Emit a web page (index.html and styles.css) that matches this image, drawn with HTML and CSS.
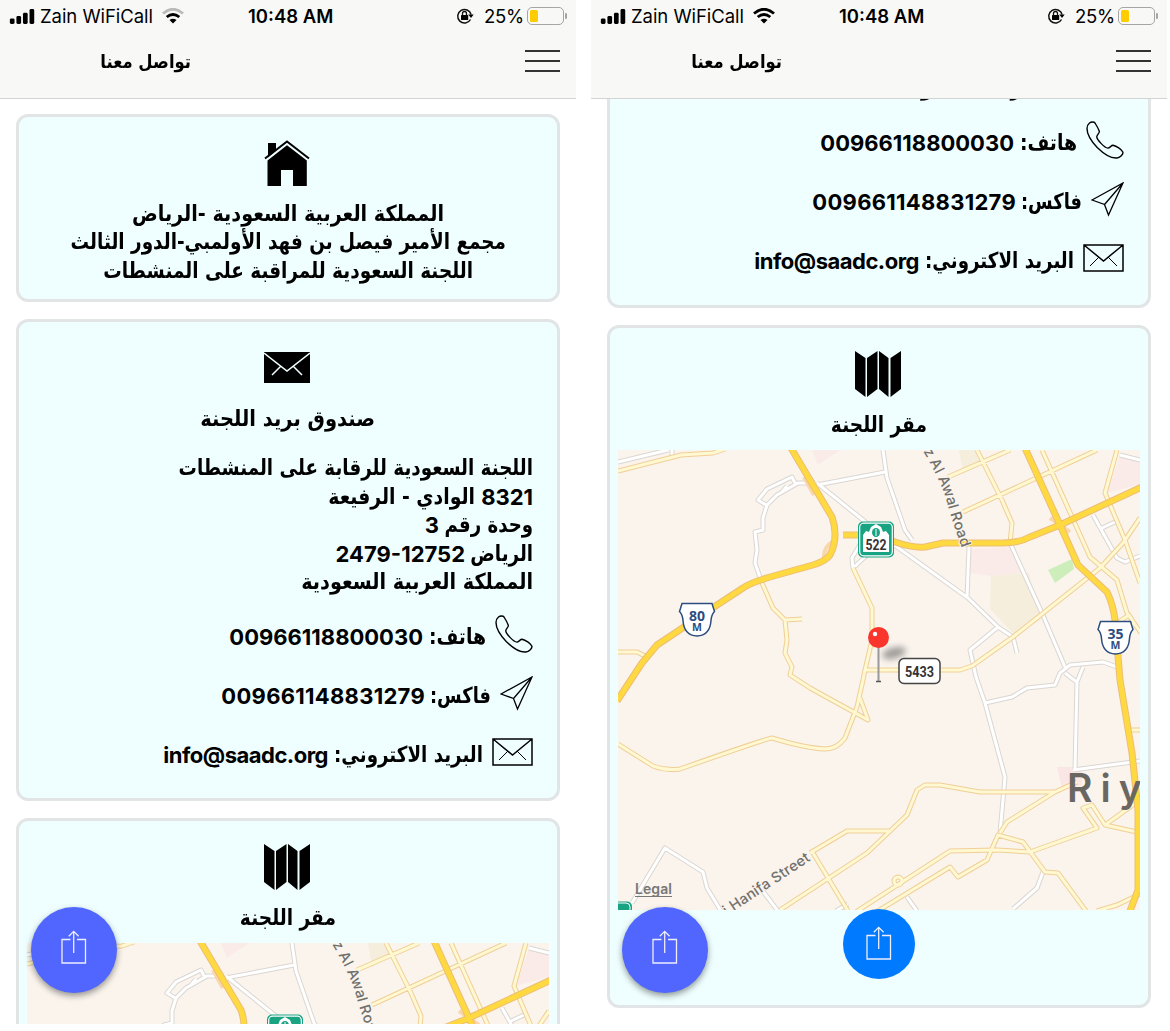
FILE: index.html
```html
<!DOCTYPE html>
<html lang="ar">
<head>
<meta charset="utf-8">
<title>تواصل معنا</title>
<link rel="stylesheet" href="styles.css">
</head>
<body>
<svg class="defs" aria-hidden="true">
  <defs>
    <symbol id="signal" viewBox="0 0 27 16">
      <rect x="0" y="10" width="5" height="6" rx="1.5"/><rect x="7" y="7.500" width="5" height="8.500" rx="1.500"/><rect x="14" y="4" width="5" height="12" rx="1.500"/><rect x="21" y="0" width="5" height="16" rx="1.500"/>
    </symbol>
    <symbol id="lock" viewBox="0 0 18 18">
      <path d="M14.500 12.500a6.800 6.800 0 1 1 .6-5" fill="none" stroke="#111" stroke-width="1.500"/>
      <path d="M12.300 7.400h5.400l-2.700 3.500z"/><rect x="5" y="8" width="7.200" height="5" rx=".6"/>
      <path d="M6.500 8.500V6.500a2 2 0 0 1 4 0v2" fill="none" stroke="#111" stroke-width="1.300"/>
    </symbol>
    <symbol id="home" viewBox="0 0 46 46">
      <path d="M4 3h8v7.500L4 17.500z"/><path d="M1 18.500 23 1.500l22 17" fill="none" stroke="#000" stroke-width="2"/>
      <path d="M3.500 20.500 23 5.300l19.800 15.200V46H29V30H17v16H3.500z"/>
    </symbol>
    <symbol id="mail-solid" viewBox="0 0 46 31">
      <path d="M0 0h46v31H0z"/><path d="M0 1l23 18L46 1M17 14 8 23m21-9 9 9" fill="none" stroke="#efffff" stroke-width="1.500"/>
    </symbol>
    <symbol id="map-icon" viewBox="0 0 46 46">
      <path d="M0 0l10.500 7v39L0 38zM12 7l10.500-7v38L12 46zM24 0l9.500 7v39L24 38zM35.500 7 46 0v38l-10.500 8z"/>
    </symbol>
    <symbol id="phone" viewBox="0 0 38 38">
      <path d="M3.500 2C5 .8 8 .5 9 2c2 3.200 3.500 6 4.300 8.200.6 1.700-2.200 3.500-2.500 5.300-.5 3 8 11.500 11 11.600 2 .1 3.500-3 5.200-2.800 3.500.8 8.500 4 9.800 6.700.8 2-2.800 5.700-6 6-7.500.7-15-6-19.600-10.500C6.500 21.500 1 14 1 7.500 1 5 2 3.200 3.500 2z" fill="none" stroke="#000" stroke-width="1.400"/>
    </symbol>
    <symbol id="plane" viewBox="0 0 33 36">
      <path d="M1 18 32 1 17.500 33 13.500 22.500zM13.500 22.500 32 1M1 18l12.500 4.500" fill="none" stroke="#000" stroke-width="1.300"/>
    </symbol>
    <symbol id="mail" viewBox="0 0 41 30">
      <path d="M1 1h39v26H1zM1 1l19.500 16L40 1" fill="none" stroke="#000" stroke-width="1.500"/><path d="M16 13 7 22m18-9 9 9" fill="none" stroke="#000"/>
    </symbol>
    <symbol id="share" viewBox="0 0 26 34">
      <path d="M9.500 9.500H1V33h23.500V9.500H16M12.700 23V1.500M7.800 6.300l4.900-4.900 4.900 4.900" fill="none" stroke="#eef" stroke-width="1.300"/>
    </symbol>

    <path id="side-roads" d="M618 462 668 450M672 449v8M815 483h-17l-21 12-10 10-4 13v12l-8 2 2 18-2 13 7 20M766 505l-8-5 9-11 25-12 4 8M782 492l5-6M817 485l68-13M817 483l46 37 34 27 71 51 30 29 15 10 4 16M883 450l4 28 18 52 7 10M969 547l-2 51M1011 545l31 68 23 54M998 627l-28 23 6 27 9 26 20 74-5 56M985 703l27-6 15-9 28-3 5-12 10-8 33-3 14 5M1083 667l-6 15-2 88M1065 673l13 10M1073 770l67-9M1043 872l-6 16-24 21M632 903l33-55 38 24 4 16 14 23M762 890l16 21M836 911l12-7M907 897l10 14M1093 515l24 43 8 4 15-6M1102 528l13-6M1120 455l20 5M861 543l-9 15 1 10 12-11 8-9"/>
    <g id="streets">
      <path d="M618 471l63-16 32-2 12-4M762 583l11 25 12 12 17-1M785 620l2 20-2 13 7 14-2 8 20 13 58 32-8-22M853 568l19 40v32l-7 30-2 10-6 27-12 31q-8 11-20 11-20-1-53-11-4 0-92 31-14 2-27-3l-35-22M865 670h95l12-4 41-29 87-69 23-25 17-25M977 450l25 50 10 23-2 21M948 477l62-27M963 512l134-62M1042 450l48 107 27 23 10 33 14 20M1117 450l-12 43 20 47 15 43M618 652h19l10 5M780 910l87-57 40-38 10-25 8-5h15l40 7h75l22-10M810 853l37-22h43M813 853l35 58M848 917l102-66 47-1 33 2 67-24-14-20 9-3 13 20 32 7M868 917l82-50 8 10 29-17 11-25 25 7 22 30 13 1 28 38M1000 833l7-11 48-30M1105 825l35-25M1097 911l20-6 23-11M1128 730h12M1117 623l12-8 5 8-7 9"/>
      <circle cx="898" cy="881" r="4"/>
    </g>
    <path id="highways" d="M791 448 832 517q7 20-2 38-4 6-17 10l-43 12q-20 6-27 11l-26 17-60 40-15 18-25 38M843 535h32l20 7q18 6 30 5l18-4h60q16 0 27-6l30-12 82-38M1025 448l35 77 18 40 29 27q6 12 8 28l5 60 12 73 6 57v80l-8 21"/>

    <symbol id="riyadh" viewBox="618 450 522 460">
      <rect x="618" y="450" width="522" height="460" fill="#faf4ed"/>
      <path d="M812 450h28l-22 15zM971 549l40-2 10 26-22 4-29-4zM1120 456l20 5v23l-33 9z" fill="#fbebe8"/>
      <path d="M959 450h18l8 12-22 12zM991 576l38-3 12 47-27 14-24-25z" fill="#f5eedd"/>
      <path d="M1057 767h25v18l-20 4z" fill="#fae6e4"/>
      <path d="M1048 570l24-11 2 10-19 14z" fill="#cdeebb"/>
      <g fill="none" stroke-linejoin="round">
        <use href="#side-roads" stroke="#dad6d2" stroke-width="5"/>
        <use href="#side-roads" stroke="#fff" stroke-width="3"/>
        <use href="#streets" stroke="#efcf99" stroke-width="5"/>
        <use href="#streets" stroke="#fff8d0" stroke-width="3"/>
        <path d="M804 477l10 18M836 540q-12 5-12 17M1050 518l20 14" stroke="#f9d7ac" stroke-width="4"/>
        <use href="#highways" stroke="#edbd77" stroke-width="7"/>
        <use href="#highways" stroke="#ffd940" stroke-width="5"/>
      </g>
      <path id="awal" d="M923 451Q942 483 947 502Q952 522 967 562" fill="none"/>
      <text class="street"><textPath href="#awal">z Al Awal Road</textPath></text>
      <text class="street" transform="translate(811 860) rotate(-33.500)" text-anchor="end">si Hanifa Street</text>
      <text class="city" x="1067" y="802">Riy</text>
      <text class="legal" x="635" y="894" textLength="37">Legal</text>
      <path d="M635 896.500h37" stroke="#777"/>
      <rect x="602" y="901.500" width="30" height="20" rx="5" fill="#18a383"/>
      <path d="M618 903h8q4 0 4 4v3" fill="none" stroke="#fff"/>
      <rect x="858" y="521.500" width="36" height="36" rx="5" fill="#18a383"/>
      <rect x="859.700" y="523.200" width="32.600" height="32.600" rx="4" fill="none" stroke="#fff" stroke-width="1.200"/>
      <path d="M863 552v-17l3-4 3 1 2-5 5-3 5 3 2 5 3-1 3 4v17z" fill="#fff"/>
      <ellipse cx="876" cy="532.500" rx="4" ry="4.500" fill="#18a383"/><path d="M876 529v7" stroke="#fff"/>
      <text class="route" x="876" y="549.500" textLength="21" lengthAdjust="spacingAndGlyphs">522</text>
      <g id="shield"><path d="M682 603.500h30l2.500 8q-3 3-3.500 9-1 15-14 15.500-13-.5-14-15.500-.5-6-3.500-9z" fill="#fff" stroke="#2d4d80" stroke-width="1.500"/></g>
      <use href="#shield" x="418.500" y="18"/>
      <text class="shield" x="697" y="620.500">80</text><text class="shield small" x="697" y="631">M</text>
      <text class="shield" x="1115.500" y="638.500">35</text><text class="shield small" x="1115.500" y="649">M</text>
      <ellipse class="pin-shadow" cx="894" cy="653" rx="12" ry="5.500" transform="rotate(-15 894 653)"/>
      <path d="M878.500 646v35" stroke="#999" stroke-width="2"/><path d="M876 681.500h5" stroke="#555" stroke-width="1.500"/>
      <circle cx="878.500" cy="637.500" r="10.500" fill="#fa352b"/><circle cx="875" cy="634" r="2.200" fill="#fff"/>
      <rect x="899" y="658.500" width="41" height="25" rx="5" fill="#fff" stroke="#444" stroke-width="1.500"/>
      <text class="route" x="919.500" y="676.500" textLength="29" lengthAdjust="spacingAndGlyphs">5433</text>
    </symbol>
  </defs>
</svg>

<main class="screens">
  <section class="phone">
    <header class="bar">
      <div class="status">
        <svg class="signal"><use href="#signal"/></svg>
        <span class="carrier">Zain WiFiCall</span>
        <svg class="wifi" viewBox="0 0 22 16"><g fill="none" stroke-width="2.800"><path d="M1 5.500q10-8.500 20 0" stroke="#bbb"/><path d="M4.700 9q6.300-5 12.600 0" stroke="#000"/></g><path d="M7.500 12q3.500-2.600 7 0L11 15.500z"/></svg>
        <span class="clock">10:48 AM</span>
        <svg class="lock"><use href="#lock"/></svg>
        <span class="percent">25%</span>
        <span class="battery"><i></i></span>
      </div>
      <div class="nav"><h1 dir="rtl"><span class="ar">تواصل معنا</span></h1><div class="menu"><i></i><i></i><i></i></div></div>
    </header>
    <div class="scroll">
      <article class="card place">
        <svg class="icon home"><use href="#home"/></svg>
        <p dir="rtl"><span class="ar l1">المملكة العربية السعودية -الرياض</span></p>
        <p dir="rtl"><span class="ar l2">مجمع الأمير فيصل بن فهد الأولمبي-الدور الثالث</span></p>
        <p dir="rtl"><span class="ar l3">اللجنة السعودية للمراقبة على المنشطات</span></p>
      </article>
      <article class="card contact">
        <svg class="icon envelope"><use href="#mail-solid"/></svg>
        <h2 dir="rtl"><span class="ar t1">صندوق بريد اللجنة</span></h2>
        <div class="address" dir="rtl">
          <p><span class="ar a1">اللجنة السعودية للرقابة على المنشطات</span></p>
          <p><span>8321</span><span class="ar a2">الوادي - الرفيعة</span></p>
          <p><span class="ar a3">وحدة رقم</span><span>3</span></p>
          <p><span class="ar a4">الرياض</span><span dir="ltr">2479-12752</span></p>
          <p><span class="ar a5">المملكة العربية السعودية</span></p>
        </div>
        <div class="row" dir="rtl"><svg class="i-phone"><use href="#phone"/></svg><span class="ar r1">هاتف:</span><span>00966118800030</span></div>
        <div class="row" dir="rtl"><svg class="i-plane"><use href="#plane"/></svg><span class="ar r2">فاكس:</span><span class="fax">009661148831279</span></div>
        <div class="row" dir="rtl"><svg class="i-mail"><use href="#mail"/></svg><span class="ar r3">البريد الاكتروني:</span><span class="email">info@saadc.org</span></div>
      </article>
      <article class="card office">
        <svg class="icon mapicon"><use href="#map-icon"/></svg>
        <h2 dir="rtl"><span class="ar t2">مقر اللجنة</span></h2>
        <svg class="map"><use href="#riyadh"/></svg>
        <button class="share"><svg><use href="#share"/></svg></button>
      </article>
    </div>
    <button class="fab"><svg><use href="#share"/></svg></button>
  </section>

  <section class="phone scrolled">
    <header class="bar">
      <div class="status">
        <svg class="signal"><use href="#signal"/></svg>
        <span class="carrier">Zain WiFiCall</span>
        <svg class="wifi" viewBox="0 0 22 16"><g fill="none" stroke-width="2.800"><path d="M1 5.500q10-8.500 20 0" stroke="#000"/><path d="M4.700 9q6.300-5 12.600 0" stroke="#000"/></g><path d="M7.500 12q3.500-2.600 7 0L11 15.500z"/></svg>
        <span class="clock">10:48 AM</span>
        <svg class="lock"><use href="#lock"/></svg>
        <span class="percent">25%</span>
        <span class="battery"><i></i></span>
      </div>
      <div class="nav"><h1 dir="rtl"><span class="ar">تواصل معنا</span></h1><div class="menu"><i></i><i></i><i></i></div></div>
    </header>
    <div class="scroll">
      <article class="card contact">
        <div class="address" dir="rtl">
          <p><span class="ar a5">المملكة العربية السعودية</span></p>
        </div>
        <div class="row" dir="rtl"><svg class="i-phone"><use href="#phone"/></svg><span class="ar r1">هاتف:</span><span>00966118800030</span></div>
        <div class="row" dir="rtl"><svg class="i-plane"><use href="#plane"/></svg><span class="ar r2">فاكس:</span><span class="fax">009661148831279</span></div>
        <div class="row" dir="rtl"><svg class="i-mail"><use href="#mail"/></svg><span class="ar r3">البريد الاكتروني:</span><span class="email">info@saadc.org</span></div>
      </article>
      <article class="card office">
        <svg class="icon mapicon"><use href="#map-icon"/></svg>
        <h2 dir="rtl"><span class="ar t2">مقر اللجنة</span></h2>
        <svg class="map"><use href="#riyadh"/></svg>
        <button class="share"><svg><use href="#share"/></svg></button>
      </article>
    </div>
    <button class="fab"><svg><use href="#share"/></svg></button>
  </section>
</main>
</body>
</html>
```
FILE: styles.css
```css
* { box-sizing: border-box; margin: 0; padding: 0; }
body { background: #fff; color: #000; font-family: Inter, "DejaVu Sans", sans-serif; overflow: hidden; }
svg { display: block; flex: none; }
button { border: 0; }
.defs { position: absolute; width: 0; height: 0; }
.screens { display: flex; gap: 15px; height: 1031px; }
.phone { position: relative; width: 576px; height: 1024px; overflow: hidden; display: flex; flex-direction: column; flex: none; }

.bar { height: 98.500px; flex: none; background: #f8f8f7; border-bottom: 1.500px solid #d3d3d3; }
.status { height: 32px; display: flex; align-items: center; padding: 0 9px; font-size: 18.500px; white-space: nowrap; }
.status svg { fill: #000; }
.signal { width: 27px; height: 15px; }
.carrier { width: 113px; margin-left: 4px; letter-spacing: -.05px; }
.wifi { width: 22px; height: 16px; margin-left: 9px; }
.clock { font-weight: 600; width: 87px; margin-left: 64px; }
.lock { width: 18px; height: 18px; margin-left: 121px; }
.percent { width: 39px; margin-left: 10px; letter-spacing: -.3px; }
.battery { position: relative; width: 37px; height: 18px; margin-left: 4px; padding: 2px; border: 1.500px solid #a5a5a5; border-radius: 5px; flex: none; }
.battery i { display: block; width: 8px; height: 100%; background: #ffcc00; border-radius: 1.500px; }
.battery::after { content: ""; position: absolute; right: -4px; top: 5px; width: 2px; height: 6px; background: #a5a5a5; border-radius: 1px; }
.nav { height: 60px; display: flex; justify-content: space-between; padding: 0 16px 0 100px; }
.nav h1 { width: 91px; font-size: 19px; font-weight: 700; line-height: 59px; white-space: nowrap; }
.menu { display: flex; flex-direction: column; gap: 8px; padding-top: 17.500px; }
.menu i { width: 35px; height: 2px; background: #333; }

/* Arabic runs are set slightly condensed, anchored at their right edge */
.ar { display: block; flex: none; transform: scaleX(.855); transform-origin: right center; font-family: "DejaVu Sans", sans-serif; }
.nav .ar { transform: scaleX(.865); }
.l1 { width: 311px; transform: scaleX(.872); }
.l2 { width: 435px; transform: scaleX(.837); }
.l3 { width: 369px; transform: scaleX(.839); }
.t1 { width: 174px; transform: scaleX(.885); }
.t2 { width: 95px; transform: scaleX(.845); }
.a1 { width: 355px; transform: scaleX(.832); }
.a2 { width: 146px; transform: scaleX(.855); }
.a3 { width: 88px; transform: scaleX(.825); }
.a4 { width: 62px; transform: scaleX(.83); }
.a5 { width: 231px; transform: scaleX(.873); }
.r1 { width: 56px; }
.r2 { width: 59px; transform: scaleX(.81); }
.r3 { width: 148px; transform: scaleX(.83); }

.scroll { flex: 1; min-height: 0; padding: 15px 16px 0; overflow: hidden; }
.scrolled .scroll { display: flex; flex-direction: column; padding-top: 0; }
.card { width: 544px; flex: none; display: flex; flex-direction: column; background: #efffff; border: 3px solid #e2e5e6; border-radius: 12px; margin-bottom: 17px; font-weight: 700; font-size: 22px; white-space: nowrap; }
.icon { align-self: center; width: 46px; margin-right: 2px; }
.card p { line-height: 28.500px; height: 28.500px; display: flex; gap: 6px; }
.card span { display: block; }
.place { height: 188.500px; padding-top: 23px; }
.place p { justify-content: center; }
.home { height: 46px; margin-bottom: 14px; }
.contact { height: 482px; padding: 30px 24px 0; }
.envelope { height: 31px; }
.card h2 { display: flex; justify-content: center; font-size: 22px; line-height: 30px; height: 30px; }
.contact h2 { margin: 20.500px 0 20.500px; }
.address { margin-bottom: 10.500px; }
.row { height: 59px; display: flex; align-items: center; gap: 7px; }
.row svg { margin-left: 2px; }
.i-phone { width: 38px; height: 38px; margin-top: -5px; }
.i-plane { width: 33px; height: 36px; margin-top: -4px; }
.i-mail { width: 41px; height: 30px; margin-top: -3px; }
.fax { letter-spacing: .28px; }
.email { letter-spacing: -.5px; }
.office { height: 683px; padding-top: 22.500px; align-items: center; }
.mapicon { height: 46px; margin-bottom: 13.500px; }
.map { width: 522px; height: 460px; margin: 10px 0 -1px; }
.share { width: 72px; height: 70px; border-radius: 50%; background: #007aff; display: grid; place-items: center; padding-bottom: 2px; flex: none; }
.share svg, .fab svg { width: 26px; height: 34px; }
.fab { position: absolute; left: 30.500px; top: 907px; width: 86px; height: 86px; border-radius: 50%; background: #5066ff; box-shadow: 0 3px 6px rgba(0,0,0,.4); display: grid; place-items: center; padding-bottom: 6px; }
.scrolled .contact { height: 234px; margin-top: -24.500px; padding-top: 0; border-top: 0; border-radius: 0 0 12px 12px; }

.street { font: 500 14.500px Inter, sans-serif; letter-spacing: .2px; fill: #70706c; stroke: #faf4ed; stroke-width: 2px; paint-order: stroke; }
.city { font: 600 39px Inter, sans-serif; letter-spacing: 8px; fill: #6a6762; }
.legal { font: 600 14px Inter, sans-serif; fill: #777; }
.route { font: 700 15px Roboto, sans-serif; text-anchor: middle; fill: #333; }
.shield { font: 700 14px "Open Sans", sans-serif; text-anchor: middle; fill: #2d4d80; }
.small { font-size: 10.500px; }
.pin-shadow { fill: #555; opacity: .55; filter: blur(3px); }
```
